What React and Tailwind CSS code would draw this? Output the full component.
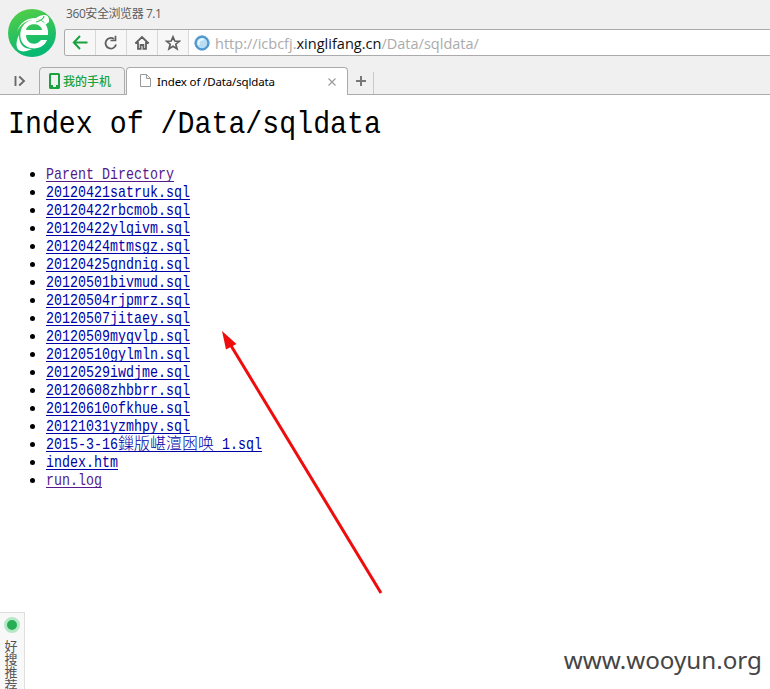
const files = [
  '20120421satruk.sql',
  '20120422rbcmob.sql',
  '20120422ylqivm.sql',
  '20120424mtmsgz.sql',
  '20120425gndnig.sql',
  '20120501bivmud.sql',
  '20120504rjpmrz.sql',
  '20120507jitaey.sql',
  '20120509myqvlp.sql',
  '20120510gylmln.sql',
  '20120529iwdjme.sql',
  '20120608zhbbrr.sql',
  '20120610ofkhue.sql',
  '20121031yzmhpy.sql',
];

function Logo() {
  return (
    <svg className="ml-2 mt-[9px] size-12 shrink-0" viewBox="0 0 48 48" fill="none">
      <defs>
        <linearGradient id="logo" x1="0" y1="0" x2="0.3" y2="1">
          <stop offset="0" stopColor="#58cf43" />
          <stop offset="1" stopColor="#08b873" />
        </linearGradient>
      </defs>
      <circle cx="24" cy="24" r="24" fill="url(#logo)" />
      <path
        d="M40 26H18C18 36 29 37 33 31H39C35 42 18 42 13.500 32C10 22 15 12 26 10.500C34 10 41 15 40 26ZM18 21H34C33 14 20 13 18 21Z"
        fill="#fff"
        fillRule="evenodd"
      />
      <path d="M11 26C5 38 10 47 24 40C16 40 11 36 11 26Z" fill="#fff" />
      <path d="M9 23C12 13 19 9 28 9C34 5 42 4 41 13L37 16C37 11 32 10 26 11C17 11 12 16 9 23Z" fill="#fff" />
      <path d="M28 13C33 12 36 9 36 7" stroke="#3cc65a" strokeWidth="1.2" />
    </svg>
  );
}

function ToolButton({ children }) {
  return (
    <div className="flex h-full w-[31px] shrink-0 items-center justify-center border-r border-[#d8d8d8] bg-[#f7f7f7]">
      {children}
    </div>
  );
}

function AddressBar() {
  return (
    <div className="ml-2 mt-[7px] flex h-[27px] items-center overflow-hidden rounded-l-[3px] border border-r-0 border-[#ababab] bg-white">
      <ToolButton>
        <svg width="16" height="16" viewBox="0 0 16 16" fill="none" stroke="#18a33f" strokeWidth="2">
          <path d="M15.5 7.500H2M8 1L1.800 7.500L8 14" />
        </svg>
      </ToolButton>
      <ToolButton>
        <svg width="14" height="16" viewBox="0 0 14 16" fill="none" stroke="#606060" strokeWidth="1.8">
          <path d="M12 9.5A5.3 5.3 0 1 1 10 4" />
          <path d="M6.500 5.500H11.500V0.800" strokeWidth="1.7" />
        </svg>
      </ToolButton>
      <ToolButton>
        <svg width="16" height="16" viewBox="0 0 16 16" fill="none" stroke="#606060" strokeWidth="1.8">
          <path d="M1.3 8.5L8 2L14.7 8.5M4 7V13.8H6.6V10H9.4V13.8H12V7" />
        </svg>
      </ToolButton>
      <ToolButton>
        <svg width="16" height="16" viewBox="0 0 16 16" fill="none" stroke="#606060" strokeWidth="1.7">
          <path d="M8 1.8L9.8 6L14.3 6.3L10.8 9.2L12 13.8L8 11.2L4 13.8L5.2 9.2L1.7 6.3L6.2 6Z" />
        </svg>
      </ToolButton>
      <svg className="ml-[5px] shrink-0" width="16" height="16" viewBox="0 0 16 16">
        <circle cx="8" cy="8" r="6.4" fill="#b9def3" stroke="#4c94cc" strokeWidth="2.2" />
        <circle cx="8" cy="8" r="7.2" fill="none" stroke="#77b3df" strokeWidth="1" strokeDasharray="2 1" />
        <path d="M5 10A4 4 0 0 1 10 4.5" fill="none" stroke="#e8f7ff" strokeWidth="2" />
      </svg>
      <div className="ml-[5px] whitespace-nowrap font-['Open_Sans','Noto_Sans',sans-serif] text-[14.54px] leading-6 text-[#ababab]">
        http://icbcfj.<span className="text-[#111]">xinglifang.cn</span>/Data/sqldata/
      </div>
    </div>
  );
}

function Tabs() {
  return (
    <div className="flex h-7 items-end">
      <div className="flex h-7 w-[39px] items-center justify-center border-b border-[#ababab]">
        <svg width="12" height="12" viewBox="0 0 12 12" fill="none" stroke="#6a6a6a" strokeWidth="1.9">
          <path d="M1.5 1V11M5.2 1.5L10 6L5.2 10.5" />
        </svg>
      </div>
      <div className="flex h-7 w-[86px] items-center rounded-t-[4px] border border-[#ababab] pl-[9px] text-[#18a33f]">
        <svg width="11" height="16" viewBox="0 0 11 16" fill="none" stroke="#18a33f">
          <rect x="1" y="1" width="9" height="14" rx="0.5" strokeWidth="2" />
          <path d="M1 13H4M7 13H10" strokeWidth="2" />
        </svg>
        <span className="ml-[3px] whitespace-nowrap font-['Noto_Sans_CJK_SC',sans-serif] text-[12px] font-medium leading-4">
          我的手机
        </span>
      </div>
      <div className="h-7 w-px border-b border-[#ababab]" />
      <div className="flex h-7 w-[222px] items-center rounded-t-[4px] border border-b-0 border-[#ababab] bg-white pl-[13px] pr-[11px]">
        <svg className="mb-[2px]" width="11" height="13" viewBox="0 0 11 13" fill="#fff" stroke="#999">
          <path d="M0.5 0.5H6.5L10.5 4.5V12.5H0.5ZM6.5 0.5V4.5H10.5" />
        </svg>
        <span className="ml-[6px] whitespace-nowrap font-['Noto_Sans','Open_Sans',sans-serif] text-[11.5px] leading-4 tracking-[-0.14px] text-black">
          Index of /Data/sqldata
        </span>
        <svg className="ml-auto" width="8" height="8" viewBox="0 0 8 8" stroke="#999" strokeWidth="1.1">
          <path d="M0.5 0.5L7.5 7.5M7.5 0.5L0.5 7.5" />
        </svg>
      </div>
      <div className="flex h-7 flex-1 items-end border-b border-[#ababab]">
        <div className="flex h-[22px] w-[26px] items-center justify-center border-r border-[#c9c9c9]">
          <svg className="mb-1" width="10" height="10" viewBox="0 0 10 10" stroke="#777" strokeWidth="2">
            <path d="M5 0V10M0 5H10" />
          </svg>
        </div>
      </div>
    </div>
  );
}

function Tall({ children }) {
  return <span className="inline-block origin-[50%_75%] scale-y-[1.2]">{children}</span>;
}

function Item({ children, visited }) {
  return (
    <li className="flex h-[18px] items-center">
      <span className="mr-[11px] size-[5px] rounded-full bg-black" />
      <a
        className={
          visited
            ? 'h-[15px] whitespace-pre border-b border-b-[#551a8b] leading-[17px] text-[#551a8b]'
            : 'h-[15px] whitespace-pre border-b border-b-[#0000a8] leading-[17px] text-[#0000a8]'
        }
      >
        {children}
      </a>
    </li>
  );
}

export default function App() {
  return (
    <div className="relative flex h-[689px] w-[770px] flex-col overflow-hidden bg-white">
      <header className="flex h-[95px] shrink-0 flex-col bg-[#f0f0f0]">
        <div className="flex h-[67px]">
          <Logo />
          <div className="min-w-0 flex-1">
            <div className="ml-[10px] mt-[6px] h-4 whitespace-nowrap font-['Open_Sans','Noto_Sans_CJK_SC',sans-serif] text-[12px] leading-4 tracking-[-0.42px] text-[#5c5c5c]">
              360安全浏览器 7.1
            </div>
            <AddressBar />
          </div>
        </div>
        <Tabs />
      </header>

      <main className="flex-1 font-['Liberation_Mono','Noto_Sans_CJK_SC',monospace] text-black">
        <h1 className="ml-2 mt-[12px] h-9 origin-[0_75%] scale-y-[1.14] whitespace-nowrap text-[28.25px] leading-9">
          Index of /Data/sqldata
        </h1>
        <ul className="ml-[30px] mt-[22px] text-[13.333px]">
          <Item visited><Tall>Parent Directory</Tall></Item>
          {files.map((name) => (
            <Item key={name}><Tall>{name}</Tall></Item>
          ))}
          <Item>
            <Tall>2015-3-16</Tall>
            <span className="text-[16px] font-light leading-[14px]">鏁版嵁澶囦唤</span>
            <Tall> 1.sql</Tall>
          </Item>
          <Item><Tall>index.htm</Tall></Item>
          <Item visited><Tall>run.log</Tall></Item>
        </ul>
      </main>

      <svg className="absolute left-[210px] top-[320px]" width="180" height="280" viewBox="0 0 180 280">
        <path d="M20 24L171 273" stroke="#ee0c0c" strokeWidth="3" />
        <path d="M12 11L26.5 24L16 29.5Z" fill="#ee0c0c" />
      </svg>

      <aside className="absolute bottom-0 left-0 flex h-[77px] w-[25px] flex-col items-center overflow-hidden border-r border-t border-[#dedede] bg-[#f8f8f8]">
        <span className="mr-px mt-[4px] size-4 shrink-0 rounded-full border-[3px] border-[#b5e8c6] bg-[#27ae55]" />
        <div className="mr-[2px] mt-[6px] w-[13px] font-['Noto_Sans_CJK_SC',sans-serif] text-[13px] leading-[13px] text-[#555]">
          好搜推荐
        </div>
      </aside>

      <div className="absolute bottom-[13px] right-[8px] whitespace-nowrap font-['Noto_Sans','Open_Sans',sans-serif] text-[24.2px] leading-8 text-[#454545]">
        www.wooyun.org
      </div>
    </div>
  );
}
